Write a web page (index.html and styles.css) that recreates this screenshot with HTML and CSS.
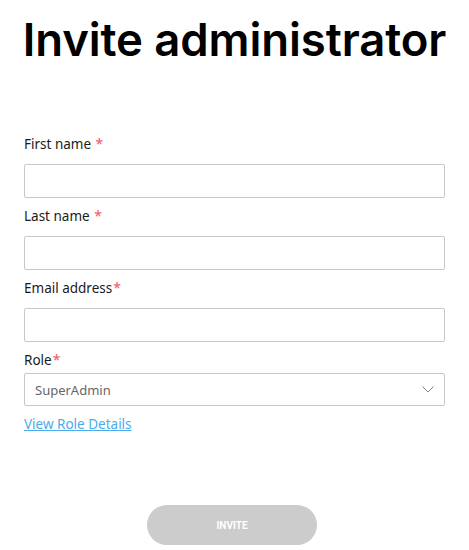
FILE: index.html
```html
<!DOCTYPE html>
<html lang="en">
<head>
<meta charset="utf-8">
<title>Invite administrator</title>
<link rel="stylesheet" href="styles.css">
</head>
<body>
<main class="page">
  <h1 class="title">Invite administrator</h1>
  <form class="form">
    <div class="field">
      <label class="label">First name <span class="req">*</span></label>
      <input class="input" type="text">
    </div>
    <div class="field">
      <label class="label">Last name <span class="req">*</span></label>
      <input class="input" type="text">
    </div>
    <div class="field">
      <label class="label">Email address<span class="req">*</span></label>
      <input class="input" type="text">
    </div>
    <div class="field field-role">
      <label class="label">Role<span class="req">*</span></label>
      <div class="select">
        <span class="select-value">SuperAdmin</span>
        <svg class="chevron" width="12" height="7" viewBox="0 0 12 7"><path d="M0.5 0.5 L6 6 L11.5 0.5" fill="none" stroke="#888" stroke-width="1"/></svg>
      </div>
    </div>
    <a class="link" href="#">View Role Details</a>
    <div class="actions">
      <button class="btn" type="button">INVITE</button>
    </div>
  </form>
</main>
</body>
</html>
```
FILE: styles.css
```css
* { box-sizing: border-box; }
html, body { margin: 0; padding: 0; background: #fff; }
body { font-family: "Noto Sans", "Open Sans", sans-serif; color: #1a1a1a; }
.page { padding: 0 24px; }
.title {
  margin: 0 -24px;
  padding-top: 15px;
  font-family: "Inter", sans-serif;
  font-weight: 600;
  font-size: 45.5px;
  line-height: 50px;
  letter-spacing: -0.1px;
  white-space: nowrap;
  text-align: center;
  color: #000;
}
.form { margin-top: 69px; display: flex; flex-direction: column; }
.field { display: flex; flex-direction: column; margin-bottom: 8px; }
.label { font-size: 13.5px; line-height: 20px; margin-bottom: 10px; color: #1a1a1a; }
.req { color: #f2555a; font-size: 14px; margin-left: 1px; }
.field-role .label { margin-bottom: 3px; }
.input {
  height: 34px;
  border: 1px solid #c8c8c8;
  border-radius: 2px;
  width: 100%;
  font: inherit;
}
.select {
  height: 33px;
  border: 1px solid #c8c8c8;
  border-radius: 2px;
  display: flex;
  align-items: center;
  justify-content: space-between;
  padding: 0 10px 0 10px;
}
.select-value { font-size: 13px; color: #666; }
.link {
  font-size: 13.5px;
  line-height: 20px;
  color: #4aacec;
  text-decoration: underline;
  align-self: flex-start;
}
.actions { display: flex; justify-content: center; margin-top: 71px; padding-right: 5px; }
.btn {
  width: 170px;
  height: 40px;
  border: none;
  border-radius: 20px;
  background: #cccccc;
  color: #fff;
  font-family: "Roboto", sans-serif;
  font-weight: 700;
  font-size: 10px;
}
```
